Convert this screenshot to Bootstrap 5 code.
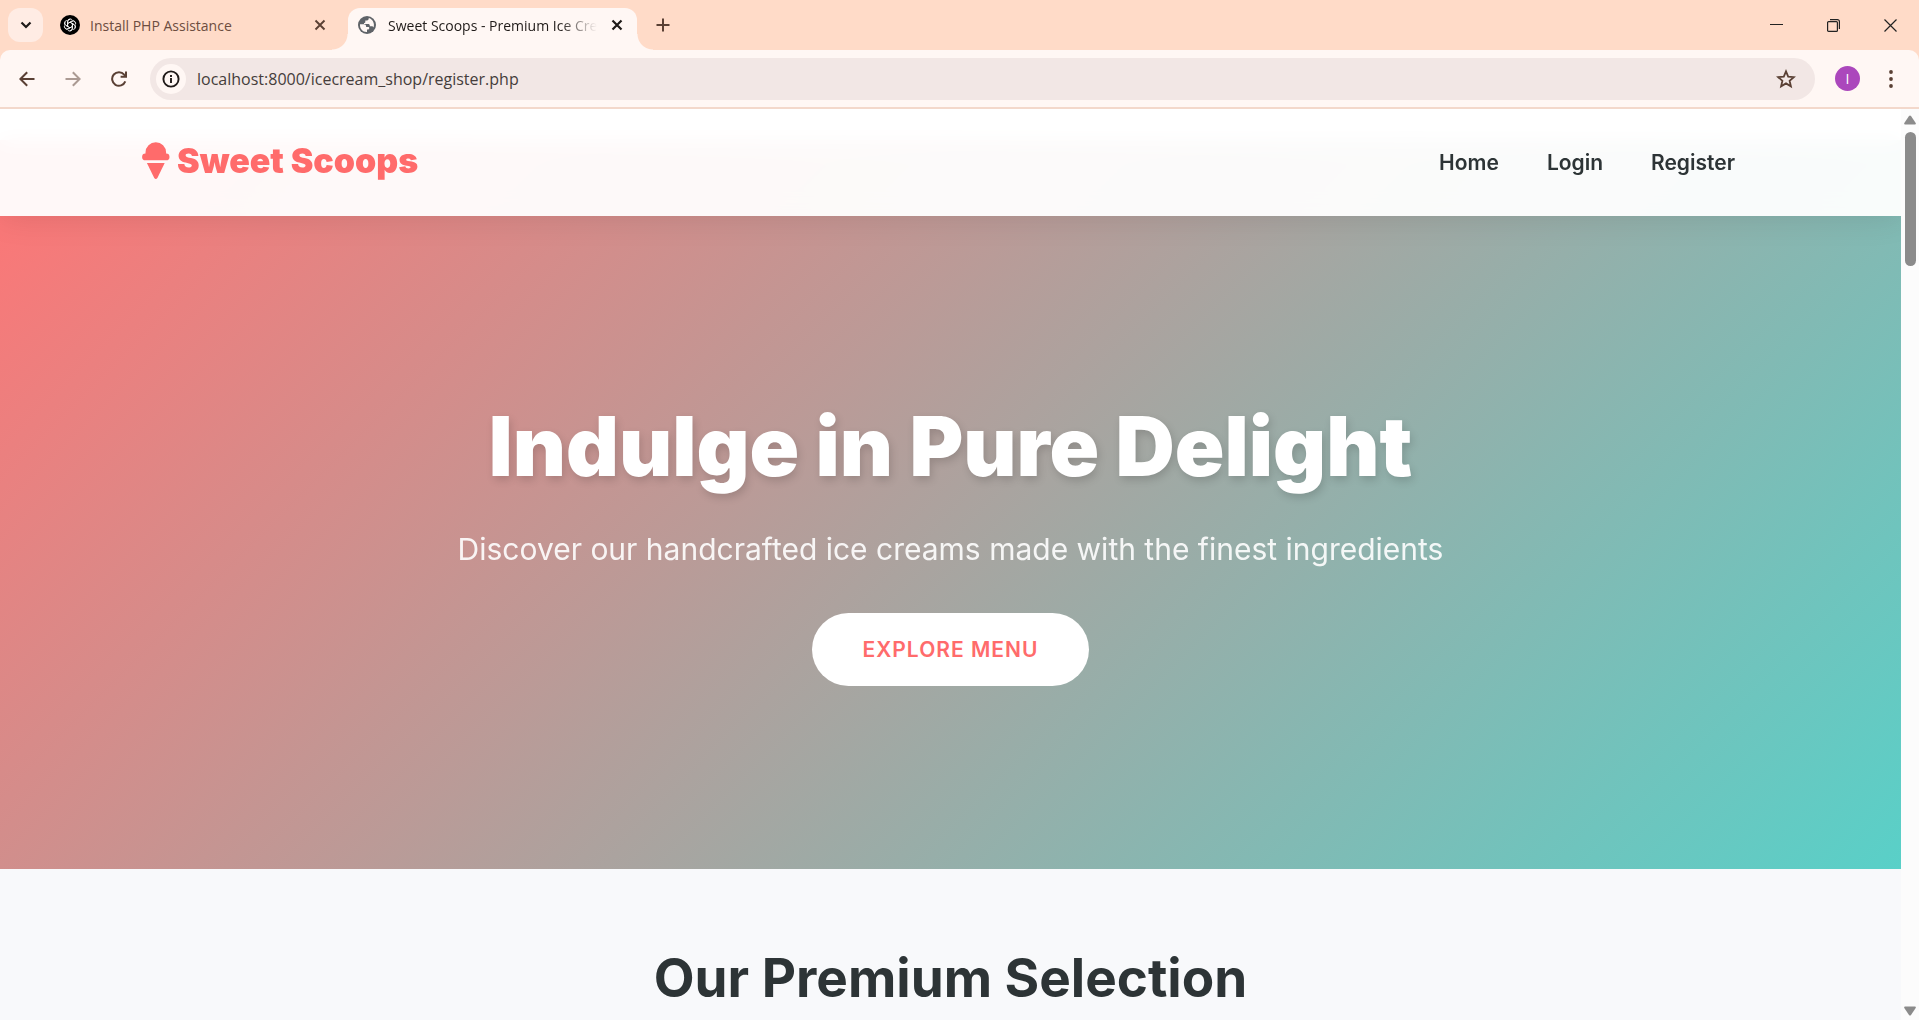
<!DOCTYPE html>
<html lang="en">
<head>
<meta charset="utf-8">
<meta name="viewport" content="width=device-width, initial-scale=1">
<title>Sweet Scoops - Premium Ice Cream</title>
<link href="https://cdn.jsdelivr.net/npm/bootstrap@5.3.0/dist/css/bootstrap.min.css" rel="stylesheet">
<style>
  :root { --coral: #ff6b6b; --ink: #2d3436; --peach: #ffdbc8; --cream: #fff7f4; --brown: #5a4034; }
  body { font-family: "Inter", "Liberation Sans", sans-serif; color: var(--ink); background: #fff; }
  .app-window { height: 100vh; }
  svg { display: block; flex: none; }

  /* browser frame */
  .frame { font-family: "Open Sans", "Noto Sans", sans-serif; }
  .frame button { border: 0; background: none; padding: 0; color: var(--brown); display: flex; align-items: center; justify-content: center; flex: none; }
  .tab-strip { background: var(--peach); height: 50px; }
  .tab-strip .tab-search { width: 35px; height: 34px; border-radius: 12px; background: #ffece4; color: #1f1a18; margin: 0 8px; }
  .tab-item { width: 297px; gap: 10px; font-size: 14px; color: #6d4d3f; padding: 0 20px 0 9px; }
  .tab-item.current { position: relative; width: 289px; height: 42px; background: var(--cream); border-radius: 12px 12px 0 0; color: #1f1a18; padding: 0 12px 8px 10px; gap: 12px; }
  .tab-item.current::before, .tab-item.current::after { content: ""; position: absolute; bottom: 0; width: 16px; height: 16px; }
  .tab-item.current::before { right: 100%; background: radial-gradient(circle at 0 0, transparent 15px, var(--cream) 16px); }
  .tab-item.current::after { left: 100%; background: radial-gradient(circle at 100% 0, transparent 15px, var(--cream) 16px); }
  .tab-item button { width: 16px; height: 16px; }
  .tab-item.current button { color: #1f1a18; }
  .tab-text { overflow: hidden; white-space: nowrap; flex: 1 1 0; }
  .current .tab-text { -webkit-mask-image: linear-gradient(90deg, #000 82%, transparent); mask-image: linear-gradient(90deg, #000 82%, transparent); }
  .tab-strip .new-tab { width: 30px; height: 30px; margin-left: 11px; }
  .win-controls button { width: 57px; height: 49px; color: #222; }
  .tool-corner { background: var(--peach); }
  .tool-bar { background: var(--cream); height: 59px; border-bottom: 2px solid #f3d8cb; border-radius: 10px 10px 0 0; padding: 0 13px 0 12px; }
  .tool-bar .tool-btn { width: 30px; height: 30px; }
  .address { background: #f2e7e5; height: 42px; border-radius: 21px; padding: 0 19px 0 6px; gap: 11px; }
  .address .site-info { width: 30px; height: 30px; border-radius: 50%; background: var(--cream); color: #1f1a18; }
  .address input { border: 0; background: none; outline: 0; font-size: 16px; color: #453d3b; padding: 0; min-width: 0; }
  .frame .profile { width: 25px; height: 25px; border-radius: 50%; background: #ab47bc; color: #fff; font-size: 14px; margin-left: 20px; }

  /* scrollbar */
  .scroll-track { width: 18px; background: #fcfcfc; padding: 6px 0 4px; }
  .scroll-thumb { width: 11px; height: 134px; border-radius: 6px; background: #8b8b8b; margin-top: 7px; }

  /* site */
  .site-nav { position: relative; z-index: 2; height: 107px; padding: 0 142px; background: rgba(255,255,255,.95); backdrop-filter: blur(10px); box-shadow: 0 2px 30px rgba(0,0,0,.1); }
  .site-nav .site-brand { color: var(--coral); font-size: 34px; line-height: 50px; font-weight: 900; gap: 7px; margin: 0; padding: 0 0 4px; }
  .site-nav .navbar-nav .nav-link { color: var(--ink); font-size: 21px; font-weight: 600; padding: 8px 24px; }
  .hero { margin-top: -76px; height: 729px; padding-top: 76px; background: linear-gradient(135deg, #ff7575 0%, #59d0c8 100%); color: #fff; }
  .hero h1 { font-size: 82px; line-height: 96px; font-weight: 900; margin-bottom: 32px; text-shadow: 2px 4px 8px rgba(0,0,0,.15); }
  .hero p { font-size: 30px; line-height: 44px; margin-bottom: 42px; opacity: .9; }
  .hero .btn-explore { background: #fff; color: var(--coral); border: 0; border-radius: 37px; font-size: 21px; line-height: 33px; font-weight: 600; letter-spacing: 1px; padding: 20px 51px; }
  .selection { background: #f8f9fb; padding-top: 77px; }
  .selection h2 { font-size: 53px; line-height: 64px; font-weight: 700; }
</style>
<script src="https://cdn.jsdelivr.net/npm/bootstrap@5.3.0/dist/js/bootstrap.bundle.min.js"></script>
</head>
<body>
<div class="app-window d-flex flex-column overflow-hidden">
  <header class="frame flex-shrink-0">
    <div class="tab-strip d-flex align-items-center">
      <button class="tab-search" aria-label="Search tabs"><svg width="12" height="12" viewBox="0 0 12 12" fill="none" stroke="currentColor" stroke-width="2.2"><path d="M1.5 3.5 6 8l4.500-4.500"/></svg></button>
      <div class="tab-item d-flex align-items-center">
        <svg width="20" height="20" viewBox="0 0 20 20"><circle cx="10" cy="10" r="10" fill="#000"/><g fill="none" stroke="#fff" stroke-width=".8"><path id="petal" d="M7.600 10.800V6.500a2.600 2.600 0 0 1 4.700-1.500M7.600 8.600l3.800-2.200a2.600 2.600 0 0 1 3.700 1"/><use href="#petal" transform="rotate(60 10 10)"/><use href="#petal" transform="rotate(120 10 10)"/><use href="#petal" transform="rotate(180 10 10)"/><use href="#petal" transform="rotate(240 10 10)"/><use href="#petal" transform="rotate(300 10 10)"/></g></svg>
        <span class="tab-text">Install PHP Assistance</span>
        <button aria-label="Close tab"><svg width="12" height="12" viewBox="0 0 12 12" stroke="currentColor" stroke-width="1.900"><path d="M1.500 1.500l9 9M10.500 1.500l-9 9"/></svg></button>
      </div>
      <div class="tab-item current d-flex align-items-center align-self-end">
        <svg width="18" height="18" viewBox="0 0 18 18"><circle cx="9" cy="9" r="9" fill="#5f6368"/><path d="M2 8.200h3.800c1.600 0 2.300.8 2.300 2v.7h2c.8 0 1.200.5 1.200 1.200 0 .9-.6 1.500-1.500 1.500H9v2.300C5 16.200 1.700 13 2 8.200zM10.800 2.100c-.1 1.500-.5 2.400-1.900 2.400H7.300v1.400c0 .8-.5 1.100-1.300 1.100v1h4.200c1 0 1.600.6 1.600 1.500v.8h1.800c.9 0 1.600.5 1.900 1.300C17 7.800 14.800 3.300 10.800 2.100z" fill="#fff7f4"/></svg>
        <span class="tab-text">Sweet Scoops - Premium Ice Cream</span>
        <button aria-label="Close tab"><svg width="12" height="12" viewBox="0 0 12 12" stroke="currentColor" stroke-width="2.200"><path d="M1.500 1.500l9 9M10.500 1.500l-9 9"/></svg></button>
      </div>
      <button class="new-tab" aria-label="New tab"><svg width="14" height="14" viewBox="0 0 14 14" stroke="currentColor" stroke-width="2"><path d="M7 .5v13M.5 7h13"/></svg></button>
      <div class="win-controls d-flex ms-auto">
        <button aria-label="Minimize"><svg width="13" height="13" viewBox="0 0 13 13" stroke="currentColor"><path d="M0 5.500h13"/></svg></button>
        <button aria-label="Restore"><svg width="13" height="13" viewBox="0 0 13 13" fill="none" stroke="currentColor" stroke-width="1.200"><rect x=".6" y="2.600" width="9.800" height="9.800" rx="1"/><path d="M3 .6h7.400a2 2 0 0 1 2 2V10"/></svg></button>
        <button aria-label="Close window"><svg width="13" height="13" viewBox="0 0 13 13" stroke="currentColor" stroke-width="1.200"><path d="M.5.500l12 12M12.500.500l-12 12"/></svg></button>
      </div>
    </div>
    <div class="tool-corner">
      <div class="tool-bar d-flex align-items-center">
        <button class="tool-btn" aria-label="Back"><svg width="16" height="16" viewBox="0 0 16 16" fill="none" stroke="currentColor" stroke-width="2"><path d="M15.500 8H1.500M8.200 1.200 1.400 8l6.800 6.800"/></svg></button>
        <button class="tool-btn ms-3 opacity-50" aria-label="Forward"><svg width="16" height="16" viewBox="0 0 16 16" fill="none" stroke="currentColor" stroke-width="2"><path d="M.5 8h14M7.800 1.200 14.600 8l-6.800 6.800"/></svg></button>
        <button class="tool-btn ms-3" aria-label="Reload"><svg width="16" height="16" viewBox="0 0 16 16" fill="none" stroke="currentColor" stroke-width="2"><path d="M14.300 10.400A6.800 6.800 0 1 1 13.200 3.600L15 5.500M15 .5v5.300H9.600"/></svg></button>
        <div class="address d-flex align-items-center flex-grow-1 ms-3">
          <button class="site-info" aria-label="Site information"><svg width="18" height="18" viewBox="0 0 18 18" fill="none" stroke="currentColor" stroke-width="1.900"><circle cx="9" cy="9" r="7.600"/><path d="M9 8v5M9 5v2"/></svg></button>
          <input class="flex-grow-1" type="text" aria-label="Address" value="localhost:8000/icecream_shop/register.php">
          <button aria-label="Bookmark"><svg width="20" height="20" viewBox="0 0 20 20" fill="none" stroke="currentColor" stroke-width="1.800"><path d="M10 2.400l2.200 5.200 5.600.5-4.200 3.700 1.300 5.500-4.900-2.900-4.900 2.900 1.300-5.500L2.200 8.100l5.600-.5z"/></svg></button>
        </div>
        <button class="profile" aria-label="Profile">I</button>
        <button class="tool-btn ms-3" aria-label="Menu"><svg width="4" height="18" viewBox="0 0 4 18" fill="currentColor"><circle cx="2" cy="2" r="1.900"/><circle cx="2" cy="9" r="1.900"/><circle cx="2" cy="16" r="1.900"/></svg></button>
      </div>
    </div>
  </header>

  <div class="d-flex flex-grow-1 overflow-hidden">
    <div class="flex-grow-1 d-flex flex-column overflow-hidden">
      <nav class="site-nav navbar navbar-expand flex-shrink-0 justify-content-between">
        <a class="navbar-brand site-brand d-flex align-items-center" href="#">
          <svg width="28" height="37" viewBox="0 0 28 37" fill="currentColor"><path d="M3.500 11.500V10.500a10.300 10.300 0 0 1 20.600 0v1a3.400 3.400 0 0 1 0 6.800H3.500a3.400 3.400 0 0 1 0-6.800z"/><path d="M4.900 21h17.800L15.500 35.700q-1.700 2.400-3.400 0z"/></svg>
          <span>Sweet Scoops</span>
        </a>
        <div class="navbar-nav">
          <a class="nav-link" href="#">Home</a>
          <a class="nav-link" href="#">Login</a>
          <a class="nav-link" href="#">Register</a>
        </div>
      </nav>
      <section class="hero flex-shrink-0 d-flex flex-column align-items-center justify-content-center text-center">
        <h1>Indulge in Pure Delight</h1>
        <p>Discover our handcrafted ice creams made with the finest ingredients</p>
        <button class="btn btn-explore">EXPLORE MENU</button>
      </section>
      <section class="selection flex-grow-1 text-center">
        <h2>Our Premium Selection</h2>
      </section>
    </div>
    <div class="scroll-track d-flex flex-column align-items-center flex-shrink-0">
      <svg width="12" height="10" viewBox="0 0 12 10" fill="#8b8b8b"><path d="M5 1q1-1.200 2 0l4.700 7q.6 1.500-.8 1.500H1.100Q-.3 9.500.3 8z"/></svg>
      <div class="scroll-thumb"></div>
      <svg class="mt-auto" width="12" height="10" viewBox="0 0 12 10" fill="#8b8b8b"><path d="M5 9q1 1.200 2 0l4.700-7q.6-1.500-.8-1.500H1.100Q-.3.500.3 2z"/></svg>
    </div>
  </div>
</div>
</body>
</html>
